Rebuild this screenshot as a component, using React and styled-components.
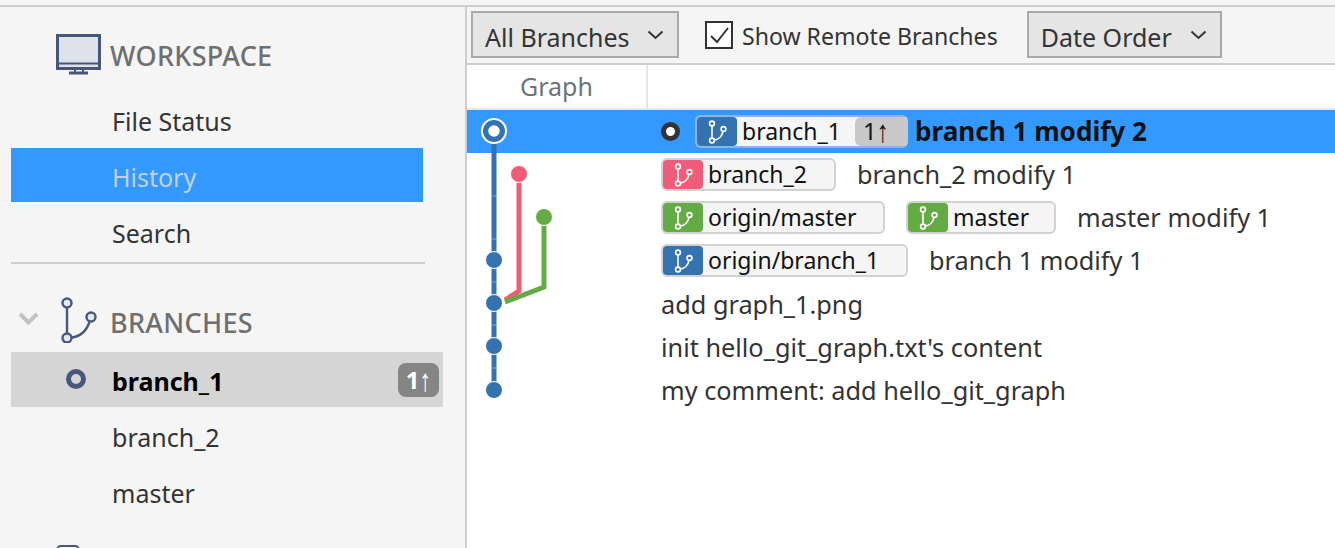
import React from "react";
import styled, { createGlobalStyle } from "styled-components";

const BLUE = "#3572b0";
const PINK = "#f15c79";
const GREEN = "#65ab45";
const SLATE = "#46587a";

const GlobalStyle = createGlobalStyle`
    html, body {
        margin: 0;
        height: 100%;
        overflow: hidden;
        background: #fff;
    }
    body {
        font-family: "Noto Sans", "Open Sans", sans-serif;
        font-size: 25px;
        color: #333;
    }
`;

const BranchGlyph = ({ size = 24, color = "#fff", width = 1.6 }) => (
    <svg width={size} height={size} viewBox="0 0 24 24" fill="none" stroke={color} strokeWidth={width}>
        <circle cx="7" cy="3.5" r="2.4" />
        <circle cx="7" cy="20.5" r="2.4" />
        <circle cx="18.5" cy="9" r="2.4" />
        <path d="M7 6v12M9.3 20c5-.6 8-4.500 8.600-8.700" />
    </svg>
);

const BranchesIcon = () => (
    <svg width="38" height="46" viewBox="0 0 38 46" fill="none" stroke={SLATE} strokeWidth="2.400">
        <circle cx="7" cy="6" r="4.500" fill="#e6e8ee" />
        <circle cx="7" cy="41" r="4.500" fill="#e6e8ee" />
        <circle cx="31" cy="20" r="4.500" fill="#e6e8ee" />
        <path d="M7 10.500v26M11.500 40.500c9-1 15-7 18-15.500" />
    </svg>
);

const MonitorIcon = () => (
    <svg width="46" height="41" viewBox="0 0 46 41">
        <rect x="1.500" y="1.500" width="42" height="33" fill="#dfe2ea" stroke={SLATE} strokeWidth="3" />
        <path d="M2 29.500h42" stroke={SLATE} strokeWidth="2" />
        <path d="M19 35v3M27 35v3" stroke={SLATE} strokeWidth="2" />
        <path d="M13 39h19" stroke={SLATE} strokeWidth="3" />
    </svg>
);

const Chevron = ({ color = "#333", w = 17, h = 10, sw = 2 }) => (
    <svg width={w} height={h} viewBox="0 0 17 10" fill="none" stroke={color} strokeWidth={sw}>
        <path d="M1.500 1.500l7 6.500 7-6.500" />
    </svg>
);

const Page = styled.div`
    display: flex;
    flex-direction: column;
    width: 1335px;
    height: 548px;
    overflow: hidden;
`;

const TopEdge = styled.div`
    height: 5px;
    flex: none;
    background: #f5f5f5;
    border-bottom: 2px solid #cecece;
`;

const Body = styled.div`
    display: flex;
    flex: 1;
    min-height: 0;
`;

const Sidebar = styled.aside`
    width: 467px;
    flex: none;
    box-sizing: border-box;
    background: #f5f5f5;
    border-right: 2px solid #cecece;
    padding: 27px 0 0 11px;
    overflow: hidden;
`;

const SectionHead = styled.div`
    display: flex;
    align-items: center;
    height: ${(p) => p.$height}px;
    margin-bottom: ${(p) => p.$after || 0}px;
    padding-left: ${(p) => p.$indent}px;
    color: #6f6f6f;
    font-weight: 500;
    font-size: 27px;
    letter-spacing: 0.3px;
`;

const HeadLabel = styled.span`
    margin-left: ${(p) => p.$gap}px;
    padding-top: 2px;
`;

const HeadIcon = styled.span`
    display: flex;
    margin-left: ${(p) => p.$gap}px;
    margin-top: ${(p) => p.$lift}px;
`;

const NavItem = styled.div`
    display: flex;
    align-items: center;
    box-sizing: border-box;
    width: ${(p) => p.$width}px;
    height: 54px;
    margin-bottom: 2px;
    padding: 4px 0 0 101px;
    background: ${(p) => p.$bg || "transparent"};
    color: ${(p) => p.$color || "#333"};
    font-weight: ${(p) => (p.$bold ? 700 : 400)};
`;

const Divider = styled.div`
    width: 414px;
    height: 2px;
    background: #cecece;
    margin: 4px 0 27px;
`;

const BranchRowDot = styled.span`
    position: absolute;
    left: 55px;
    top: 17px;
    width: 10px;
    height: 10px;
    border: 5px solid ${SLATE};
    border-radius: 50%;
`;

const BranchRow = styled(NavItem)`
    position: relative;
    height: 55px;
    margin-bottom: 1px;
    padding-top: 3px;
`;

const AheadBadge = styled.span`
    position: absolute;
    right: 4px;
    top: 11px;
    width: 41px;
    height: 34px;
    border-radius: 8px;
    background: #858585;
    color: #fff;
    font-weight: 700;
    font-size: 24px;
    line-height: 34px;
    text-align: center;
`;

const ArrowGlyph = styled.span`
    display: inline-block;
    font-family: "Liberation Sans", sans-serif;
    font-weight: 400;
    transform: scaleY(1.3);
`;

const PeekIcon = styled.div`
    position: absolute;
    left: 56px;
    top: 545px;
    width: 20px;
    height: 10px;
    border: 2px solid ${SLATE};
    border-radius: 5px 5px 0 0;
`;

const Main = styled.main`
    flex: 1;
    display: flex;
    flex-direction: column;
    min-width: 0;
`;

const Toolbar = styled.div`
    display: flex;
    align-items: center;
    height: 58px;
    flex: none;
    box-sizing: border-box;
    padding-left: 4px;
    background: #f5f5f5;
    border-bottom: 2px solid #cecece;
`;

const Select = styled.div`
    display: flex;
    align-items: center;
    justify-content: space-between;
    box-sizing: border-box;
    width: ${(p) => p.$width}px;
    height: 47px;
    padding: 5px 13px 0 12px;
    background: #e5e5e5;
    border: 2px solid #a9a9a9;
    margin-top: -2px;
`;

const SelectArrow = styled.span`
    display: flex;
    margin-top: -4px;
`;

const CheckWrap = styled.label`
    display: flex;
    align-items: center;
    margin: 0 29px 0 26px;
    padding-top: 2px;
    font-size: 23.100px;
`;

const CheckBox = styled.span`
    display: flex;
    align-items: center;
    justify-content: center;
    box-sizing: border-box;
    width: 28px;
    height: 28px;
    margin: -2px 9px 0 0;
    background: #fff;
    border: 2px solid #333;
`;

const HeaderRow = styled.div`
    display: flex;
    height: 45px;
    flex: none;
    box-sizing: border-box;
    border-bottom: 2px solid #e6e6e6;
`;

const GraphTitle = styled.div`
    width: 181px;
    flex: none;
    box-sizing: border-box;
    border-right: 2px solid #e6e6e6;
    text-align: center;
    color: #6e7377;
    line-height: 42px;
`;

const RowList = styled.div`
    position: relative;
    font-size: 25.300px;
`;

const Row = styled.div`
    display: flex;
    align-items: center;
    height: 43px;
    padding-left: 194px;
    background: ${(p) => (p.$selected ? "#3399ff" : "transparent")};
`;

const Message = styled.span`
    margin-left: ${(p) => p.$gap || 0}px;
    margin-top: ${(p) => (p.$gap ? -2 : 0)}px;
    font-weight: ${(p) => (p.$bold ? 700 : 400)};
    font-size: ${(p) => (p.$bold ? "26.100px" : "inherit")};
    color: ${(p) => (p.$bold ? "#111" : "#333")};
    white-space: nowrap;
`;

const Pill = styled.span`
    display: flex;
    align-items: stretch;
    box-sizing: border-box;
    width: ${(p) => p.$width}px;
    height: 33px;
    flex: none;
    background: #f5f5f5;
    border: 2px solid ${(p) => (p.$selected ? "#8bb6e0" : "#d2d2d2")};
    border-right-color: ${(p) => (p.$selected ? "#c8c8c8" : "#d2d2d2")};
    border-radius: 6px;
    color: #111;
    font-size: 23px;
    margin-right: ${(p) => p.$after || 0}px;
`;

const PillIcon = styled.span`
    display: flex;
    align-items: center;
    justify-content: center;
    width: 40px;
    flex: none;
    background: ${(p) => p.$color};
    border-radius: 4px;
`;

const PillName = styled.span`
    flex: 1;
    padding-left: 5px;
    line-height: 28px;
    white-space: nowrap;
`;

const PillCount = styled.span`
    width: 51px;
    flex: none;
    padding-left: 8px;
    box-sizing: border-box;
    background: #c8c8c8;
    border-radius: 6px 4px 4px 6px;
    font-size: 24px;
    line-height: 28px;
`;

const HeadRing = styled.span`
    width: 9px;
    height: 9px;
    flex: none;
    margin-right: 15px;
    border: 5px solid #333;
    border-radius: 50%;
    background: #fff;
`;

const GraphSvg = styled.svg`
    position: absolute;
    left: 0;
    top: 0;
`;

const GraphLayer = () => (
    <GraphSvg width="180" height="302" viewBox="0 0 180 302" fill="none">
        <path d="M27 21V280" stroke={BLUE} strokeWidth="5" />
        <path d="M52 65V181L38 190" stroke={PINK} strokeWidth="5" />
        <path d="M77 108V177L38 192" stroke={GREEN} strokeWidth="5" />
        {[86, 129, 172, 215, 258].map((y) => (
            <path key={y} d={`M24 ${y}h6`} stroke="#fff" strokeOpacity=".35" />
        ))}
        <circle cx="27" cy="21" r="8.500" fill="#fff" stroke={BLUE} strokeWidth="5.500" />
        <circle cx="27" cy="21" r="12" stroke="#fff" strokeWidth="2" />
        <circle cx="52" cy="64" r="8.500" fill={PINK} stroke="#fff" />
        <circle cx="77" cy="107" r="8.500" fill={GREEN} stroke="#fff" />
        {[150, 193, 236, 280].map((cy) => (
            <circle key={cy} cx="27" cy={cy} r="8.500" fill={BLUE} stroke="#fff" />
        ))}
    </GraphSvg>
);

const BranchPill = ({ name, color, width, after, selected, count }) => (
    <Pill $width={width} $after={after} $selected={selected}>
        <PillIcon $color={color}>
            <BranchGlyph />
        </PillIcon>
        <PillName>{name}</PillName>
        {count && <PillCount>{count}<ArrowGlyph>↑</ArrowGlyph></PillCount>}
    </Pill>
);

const App = () => {
    return (
        <Page>
            <GlobalStyle />
            <TopEdge />
            <Body>
                <Sidebar>
                    <SectionHead $height={41} $indent={45} $after={17}>
                        <MonitorIcon />
                        <HeadLabel $gap={8}>WORKSPACE</HeadLabel>
                    </SectionHead>
                    <NavItem $width={412}>File Status</NavItem>
                    <NavItem $width={412} $bg="#3399ff" $color="#c4cfdb">History</NavItem>
                    <NavItem $width={412}>Search</NavItem>
                    <Divider />
                    <SectionHead $height={61} $indent={7}>
                        <HeadIcon $gap={0} $lift={-6}>
                            <svg width="21" height="13" viewBox="0 0 21 13" fill="none" stroke="#c2c2c2" strokeWidth="4">
                                <path d="M2 2l8.500 8.500L19 2" />
                            </svg>
                        </HeadIcon>
                        <HeadIcon $gap={21} $lift={-4}><BranchesIcon /></HeadIcon>
                        <HeadLabel $gap={12}>BRANCHES</HeadLabel>
                    </SectionHead>
                    <BranchRow $width={432} $bg="#d5d5d5" $color="#000" $bold>
                        <BranchRowDot />
                        branch_1
                        <AheadBadge>1<ArrowGlyph>↑</ArrowGlyph></AheadBadge>
                    </BranchRow>
                    <NavItem $width={432}>branch_2</NavItem>
                    <NavItem $width={432}>master</NavItem>
                    <PeekIcon />
                </Sidebar>
                <Main>
                    <Toolbar>
                        <Select $width={208}>
                            All Branches
                            <SelectArrow><Chevron /></SelectArrow>
                        </Select>
                        <CheckWrap>
                            <CheckBox>
                                <svg width="21" height="19" viewBox="0 0 21 19" fill="none" stroke="#333" strokeWidth="2">
                                    <path d="M2 10l6 6L19 2" />
                                </svg>
                            </CheckBox>
                            Show Remote Branches
                        </CheckWrap>
                        <Select $width={195}>
                            Date Order
                            <SelectArrow><Chevron /></SelectArrow>
                        </Select>
                    </Toolbar>
                    <HeaderRow>
                        <GraphTitle>Graph</GraphTitle>
                    </HeaderRow>
                    <RowList>
                        <Row $selected>
                            <HeadRing />
                            <BranchPill name="branch_1" color={BLUE} width={213} selected count="1" />
                            <Message $bold $gap={7}>branch 1 modify 2</Message>
                        </Row>
                        <Row>
                            <BranchPill name="branch_2" color={PINK} width={175} />
                            <Message $gap={21}>branch_2 modify 1</Message>
                        </Row>
                        <Row>
                            <BranchPill name="origin/master" color={GREEN} width={224} after={21} />
                            <BranchPill name="master" color={GREEN} width={150} />
                            <Message $gap={21}>master modify 1</Message>
                        </Row>
                        <Row>
                            <BranchPill name="origin/branch_1" color={BLUE} width={247} />
                            <Message $gap={21}>branch 1 modify 1</Message>
                        </Row>
                        <Row><Message>add graph_1.png</Message></Row>
                        <Row><Message>init hello_git_graph.txt's content</Message></Row>
                        <Row><Message>my comment: add hello_git_graph</Message></Row>
                        <GraphLayer />
                    </RowList>
                </Main>
            </Body>
        </Page>
    );
};

export default App;
